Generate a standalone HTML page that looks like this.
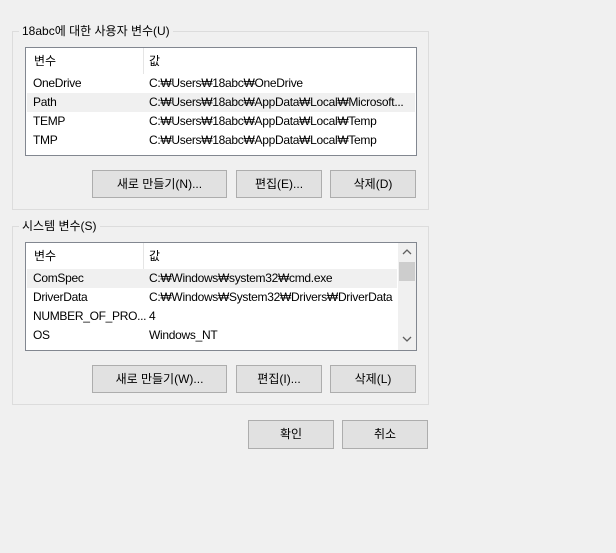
<!DOCTYPE html>
<html><head><meta charset="utf-8"><style>
body{margin:0;width:616px;height:553px;background:#f0f0f0;font-family:"Liberation Sans","Noto Sans CJK KR",sans-serif;font-size:12px;color:#000;position:relative;overflow:hidden}
.a{position:absolute}
.grp{position:absolute;border:1px solid #dcdcdc;box-sizing:border-box}
.gt{position:absolute;background:#f0f0f0;padding:0 3px;top:-8px;left:6px;line-height:14px;font-size:12px}
.lv{position:absolute;background:#fff;border:1px solid #828790;box-sizing:border-box;overflow:hidden}
.hd{position:absolute;left:0;top:0;right:0;height:26px}
.hd span{position:absolute;top:4px}
.col{position:absolute;left:117px;top:0;height:26px;border-left:1px solid #e5e5e5}
.row{position:absolute;left:1px;height:19px;line-height:18px;letter-spacing:-0.3px}
.row span{position:absolute;white-space:nowrap}
.btn{position:absolute;background:#e1e1e1;border:1px solid #adadad;box-sizing:border-box;text-align:center;font-size:12px}
</style></head><body>
<div class="grp" style="left:12px;top:31px;width:417px;height:179px"><div class="gt">18abc에 대한 사용자 변수(U)</div></div>
<div class="lv" style="left:25px;top:47px;width:392px;height:109px">
 <div class="hd"><span style="left:8px">변수</span><span style="left:123px">값</span></div><div class="col"></div>
 <div class="row" style="top:26px;width:388px"><span style="left:6px">OneDrive</span><span style="left:122px">C:₩Users₩18abc₩OneDrive</span></div>
 <div class="row" style="top:45px;width:388px;background:#f0f0f0"><span style="left:6px">Path</span><span style="left:122px">C:₩Users₩18abc₩AppData₩Local₩Microsoft...</span></div>
 <div class="row" style="top:64px;width:388px"><span style="left:6px">TEMP</span><span style="left:122px">C:₩Users₩18abc₩AppData₩Local₩Temp</span></div>
 <div class="row" style="top:83px;width:388px"><span style="left:6px">TMP</span><span style="left:122px">C:₩Users₩18abc₩AppData₩Local₩Temp</span></div>
</div>
<div class="btn" style="left:92px;top:170px;width:135px;height:28px;line-height:26px">새로 만들기(N)...</div>
<div class="btn" style="left:236px;top:170px;width:86px;height:28px;line-height:26px">편집(E)...</div>
<div class="btn" style="left:330px;top:170px;width:86px;height:28px;line-height:26px">삭제(D)</div>

<div class="grp" style="left:12px;top:226px;width:417px;height:179px"><div class="gt">시스템 변수(S)</div></div>
<div class="lv" style="left:25px;top:242px;width:392px;height:109px">
 <div class="hd"><span style="left:8px">변수</span><span style="left:123px">값</span></div><div class="col"></div>
 <div class="row" style="top:26px;width:370px;background:#f0f0f0"><span style="left:6px">ComSpec</span><span style="left:122px">C:₩Windows₩system32₩cmd.exe</span></div>
 <div class="row" style="top:45px;width:370px"><span style="left:6px">DriverData</span><span style="left:122px">C:₩Windows₩System32₩Drivers₩DriverData</span></div>
 <div class="row" style="top:64px;width:370px"><span style="left:6px">NUMBER_OF_PRO...</span><span style="left:122px">4</span></div>
 <div class="row" style="top:83px;width:370px"><span style="left:6px">OS</span><span style="left:122px">Windows_NT</span></div>
 <div class="a" style="left:372px;top:0;width:18px;height:107px;background:#f0f0f0"></div>
 <div class="a" style="left:373px;top:19px;width:16px;height:19px;background:#cdcdcd"></div>
 <svg class="a" style="left:372px;top:0" width="18" height="107"><path d="M5 11 L9 7 L13 11" fill="none" stroke="#606060" stroke-width="1.3"/><path d="M5 94 L9 98 L13 94" fill="none" stroke="#606060" stroke-width="1.3"/></svg>
</div>
<div class="btn" style="left:92px;top:365px;width:135px;height:28px;line-height:26px">새로 만들기(W)...</div>
<div class="btn" style="left:236px;top:365px;width:86px;height:28px;line-height:26px">편집(I)...</div>
<div class="btn" style="left:330px;top:365px;width:86px;height:28px;line-height:26px">삭제(L)</div>

<div class="btn" style="left:248px;top:420px;width:86px;height:29px;line-height:27px">확인</div>
<div class="btn" style="left:342px;top:420px;width:86px;height:29px;line-height:27px">취소</div>
</body></html>
